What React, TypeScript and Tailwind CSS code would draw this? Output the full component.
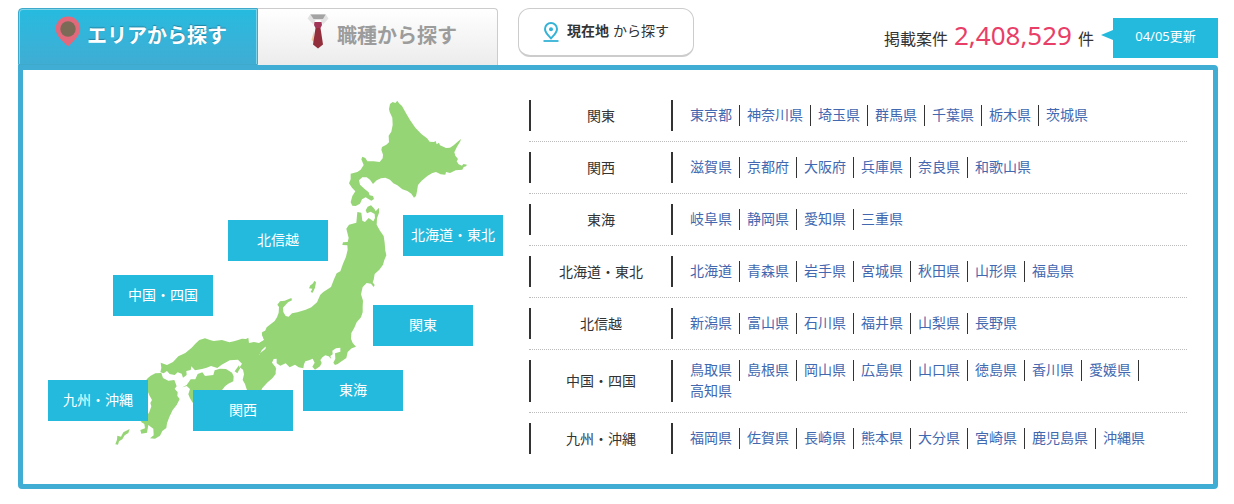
const regions = [
  { name: "関東", prefs: ["東京都", "神奈川県", "埼玉県", "群馬県", "千葉県", "栃木県", "茨城県"] },
  { name: "関西", prefs: ["滋賀県", "京都府", "大阪府", "兵庫県", "奈良県", "和歌山県"] },
  { name: "東海", prefs: ["岐阜県", "静岡県", "愛知県", "三重県"] },
  { name: "北海道・東北", prefs: ["北海道", "青森県", "岩手県", "宮城県", "秋田県", "山形県", "福島県"] },
  { name: "北信越", prefs: ["新潟県", "富山県", "石川県", "福井県", "山梨県", "長野県"] },
  {
    name: "中国・四国",
    prefs: ["鳥取県", "島根県", "岡山県", "広島県", "山口県", "徳島県", "香川県", "愛媛県", "高知県"],
  },
  {
    name: "九州・沖縄",
    prefs: ["福岡県", "佐賀県", "長崎県", "熊本県", "大分県", "宮崎県", "鹿児島県", "沖縄県"],
  },
];

// Pins on the map canvas.
const pins = [
  { name: "北海道・東北", place: "left-[355px] top-[115px]" },
  { name: "北信越", place: "left-[180px] top-[120px]" },
  { name: "中国・四国", place: "left-[65px] top-[175px]" },
  { name: "関東", place: "left-[325px] top-[205px]" },
  { name: "東海", place: "left-[255px] top-[270px]" },
  { name: "関西", place: "left-[145px] top-[290px]" },
  { name: "九州・沖縄", place: "left-0 top-[280px]" },
];

function AreaPinIcon() {
  return (
    <svg className="h-[31px] w-[26px]" viewBox="0 0 26 31" aria-hidden="true">
      <path d="M13 0.500a12 12 0 0 0-12.200 12c0 5 2.600 8.500 6 12L13 30.500l6.200-6c3.400-3.500 6-7 6-12A12 12 0 0 0 13 .5Z" fill="#e2697b" />
      <circle cx="13" cy="13" r="7.700" fill="#7b6b56" />
    </svg>
  );
}

function TieIcon() {
  return (
    <svg className="h-[35px] w-[22px]" viewBox="0 0 22 35" aria-hidden="true">
      <path d="M3.500 0h15L21.500 4.500 16 10.500 13.500 6h-5L6.500 10.500.5 4.500Z" fill="#e2e2e2" />
      <path d="M3.500 0.500h15L16 5H6.500Z" fill="#a3a3a3" />
      <path d="M7 17L4.500 26 8 29Z" fill="#efc9a0" />
      <path d="M7.500 8h7l.5 3-1.500 3h-5L7 11Z" fill="#a23658" />
      <path d="M8.500 14h5L16 30.500 11 34.500 6 30.500Z" fill="#932e3c" />
    </svg>
  );
}

function LocationIcon() {
  return (
    <svg className="h-5 w-4" viewBox="0 0 16 20" fill="none" stroke="#35b3d6" aria-hidden="true">
      <path d="M8 1a6 6 0 0 0-6 6c0 3.800 3.300 6.500 6 9.300 2.700-2.800 6-5.500 6-9.300a6 6 0 0 0-6-6Z" strokeWidth="2" />
      <circle cx="8" cy="7.300" r="2" fill="#35b3d6" stroke="none" />
      <path d="M.5 19h15" strokeWidth="1.800" />
    </svg>
  );
}

function JapanMap() {
  return (
    <svg className="absolute inset-0 h-[354px] w-[455px]" viewBox="48 100 455 354" fill="#95d575" aria-hidden="true">
      {/* Hokkaido */}
      <g transform="translate(330 90) scale(.33333)">
        <path d="M180 42L188 36 196 39 202 32 207 40 216 48 226 66 240 90 256 113 274 132 291 145 299 155 312 156 317 153 320 163 327 158 330 166 348 174 360 173 371 166 382 156 393 147 391 154 381 170 373 187 376 197 384 207 380 214 386 223 396 227 400 222 411 224 408 229 401 231 397 239 377 241 360 249 348 246 346 254 332 253 318 246 307 249 292 258 275 272 264 285 261 304 258 318 252 323 244 311 232 303 217 298 202 286 190 280 180 269 166 263 153 265 140 271 129 282 120 269 110 262 97 262 87 271 90 284 104 297 116 307 119 316 129 318 132 327 124 332 114 326 107 322 96 328 90 341 77 348 67 347 62 337 67 318 76 304 66 293 57 280 62 268 62 251 82 246 92 239 101 225 94 208 97 200 106 204 112 214 131 214 149 216 158 205 159 194 154 179 156 171 169 164 177 157 176 137 184 125 188 105 187 83 179 66 177 57Z" />
      </g>
      {/* Tohoku, Kanto, Chubu */}
      <g transform="translate(260 190) scale(.33333)">
        <path d="M292 66L304 68 307 92 315 96 326 84 340 94 345 84 344 72 332 65 321 70 317 61 323 50 333 46 343 56 347 64 357 53 357 68 351 85 350 104 360 122 371 138 374 158 376 182 379 196 373 210 369 224 358 239 344 252 341 269 338 277 344 285 341 291 333 281 320 279 308 291 303 313 309 332 308 350 308 367 303 382 290 397 283 413 274 429 273 446 278 459 288 470 275 475 263 486 259 504 247 512 233 522 225 525 220 518 226 506 225 490 241 485 241 473 228 475 217 482 218 493 211 498 214 507 206 499 196 496 188 501 181 510 185 519 180 529 165 539 157 530 164 518 158 506 147 511 136 514 132 523 130 535 116 532 105 524 89 532 77 520 61 527 50 520 50 503 40 501 33 515 39 530 49 536 41 551 25 558 10 570 0 582V490L16 477 19 468 10 474 0 482V458L13 450 5 428 14 426 20 412 44 393 51 382 56 368 57 351 52 344 60 334 74 332 94 324 96 331 84 337 69 353 70 366 77 378 86 380 96 370 112 367 137 359 154 352 171 337 181 314 190 306 213 291 222 268 230 250 241 244 249 221 258 200 263 179 262 166 247 165 249 157 263 156 266 144 259 116 267 104 289 98Z" />
        <path d="M164 272L168 277 165 293 158 308 152 306 157 296 147 295 151 286 157 282Z" />
      </g>
      {/* Western Honshu, Shikoku, Kyushu */}
      <g transform="translate(100 320) scale(.33333)">
        <path d="M540 0L524 10 512 25 487 36 486 45 492 60 477 69 462 66 447 69 445 53 438 57 426 56 412 61 402 64 388 67 366 60 341 63 330 60 315 55 298 60 286 71 275 83 256 99 235 109 219 126 201 135 182 128 184 143 181 157 191 160 201 153 209 162 224 165 233 157 245 161 249 173 260 165 259 153 272 150 274 139 285 151 306 147 320 143 333 138 352 144 365 134 389 121 414 119 426 131 419 142 429 149 432 163 428 180 435 192 440 208 448 220 480 220 487 204 503 187 517 175 527 162 527 142 516 128 521 117 530 116 540 130ZM478 106L485 91 497 79 499 90 489 97Z" fillRule="evenodd" />
        <path d="M404 154L417 136 420 145 412 160Z" />
        <path d="M247 202L260 195 272 178 286 178 293 162 307 157 315 168 340 165 344 151 360 146 378 147 396 158 401 169 400 184 385 191 375 199 362 215 285 240 278 248 270 235 265 223 270 207 260 198Z" />
        <path d="M152 167L166 160 184 159 189 174 205 182 223 180 230 199 224 206 233 217 232 228 239 237 230 255 218 270 208 291 201 310 199 324 187 333 180 347 165 356 150 355 161 346 160 326 145 315 141 338 124 341 121 330 135 325 133 312 122 305 135 296 148 276 154 259 151 249 156 240 148 226 139 205 133 187 143 175Z" />
        <path d="M89 327L85 339 74 346 67 358 57 364 54 374 46 373 51 359 52 347 63 350 70 337Z" />
      </g>
    </svg>
  );
}

export default function App() {
  return (
    <main className="bg-white pt-2 pr-4 pb-4 pl-[18px] font-['Liberation_Sans','Noto_Sans_CJK_JP',sans-serif] text-sm text-[#333]">
      <header className="flex items-start">
        <nav className="flex" aria-label="探し方">
          <a
            href="#area"
            className="flex h-[57px] w-60 items-start gap-1.5 rounded-tl border border-[#3fa9cc] bg-linear-to-b from-[#25bbdf] to-[#3fadd4] pt-[7px] pl-9 text-xl leading-10 font-bold text-white shadow-[inset_1px_1px_0_#7fd4ea,inset_-1px_0_0_#7fd4ea] [text-shadow:0_-1px_1px_#2383a0]"
          >
            <AreaPinIcon />
            <span>エリアから探す</span>
          </a>
          <a
            href="#job"
            className="flex h-[57px] w-60 items-start gap-2 rounded-tr border border-b-0 border-l-0 border-[#ccc] bg-linear-to-b from-white to-[#ececec] pt-[5px] pl-[49px] text-xl leading-[44px] font-bold text-[#9c9c9c]"
          >
            <TieIcon />
            <span>職種から探す</span>
          </a>
        </nav>
        <button
          type="button"
          className="ml-5 flex h-[49px] w-44 cursor-pointer items-center gap-2 rounded-xl border border-b-2 border-[#ccc] bg-white pl-6"
        >
          <LocationIcon />
          <span className="pb-0.5">
            <strong>現在地</strong> から探す
          </span>
        </button>
        <p className="ml-auto flex items-baseline gap-1.5 pt-[9px] text-base leading-9">
          <span>掲載案件</span>
          <span className="font-['Noto_Sans',sans-serif] text-[26px] text-[#e83e68]">2,408,529</span>
          <span>件</span>
        </p>
        <div className="mt-2.5 ml-[7px] flex items-start">
          <svg className="mt-3 h-3 w-3" viewBox="0 0 12 12" aria-hidden="true">
            <path d="M0 5L12 0V10Z" fill="#23badd" />
          </svg>
          <span className="w-[105px] bg-[#23badd] pb-1 text-center font-['Noto_Sans','Noto_Sans_CJK_JP',sans-serif] text-[13px] leading-9 text-white">
            04/05更新
          </span>
        </div>
      </header>

      <section id="area" className="flex gap-[26px] rounded rounded-tl-none border-5 border-[#3fadd4] py-[30px] pr-[26px] pl-[25px]">
        <div className="relative w-[455px] shrink-0">
          <JapanMap />
          {pins.map((pin) => (
            <a
              key={pin.name}
              href={"#" + pin.name}
              className={"absolute w-[100px] bg-[#23badd] text-center leading-[41px] text-white " + pin.place}
            >
              {pin.name}
            </a>
          ))}
        </div>

        <dl className="min-w-0 flex-1">
          {regions.map((region) => (
            <div
              key={region.name}
              id={region.name}
              className="mb-2.5 flex border-b border-dotted border-[#bbb] pb-2.5 last:mb-0 last:border-b-0 last:pb-0"
            >
              <dt className="flex w-36 shrink-0 items-center justify-center border-x-2 border-[#333]">
                {region.name}
              </dt>
              <dd className="flex min-h-[31px] flex-1 items-center pl-[10px]">
                <ul className="flex flex-wrap">
                  {region.prefs.map((pref) => (
                    <li key={pref} className="border-r border-[#333] px-[7px] leading-[21px] last:border-r-0">
                      <a href={"#" + pref} className="text-[#4268b0] hover:underline">
                        {pref}
                      </a>
                    </li>
                  ))}
                </ul>
              </dd>
            </div>
          ))}
        </dl>
      </section>
    </main>
  );
}
